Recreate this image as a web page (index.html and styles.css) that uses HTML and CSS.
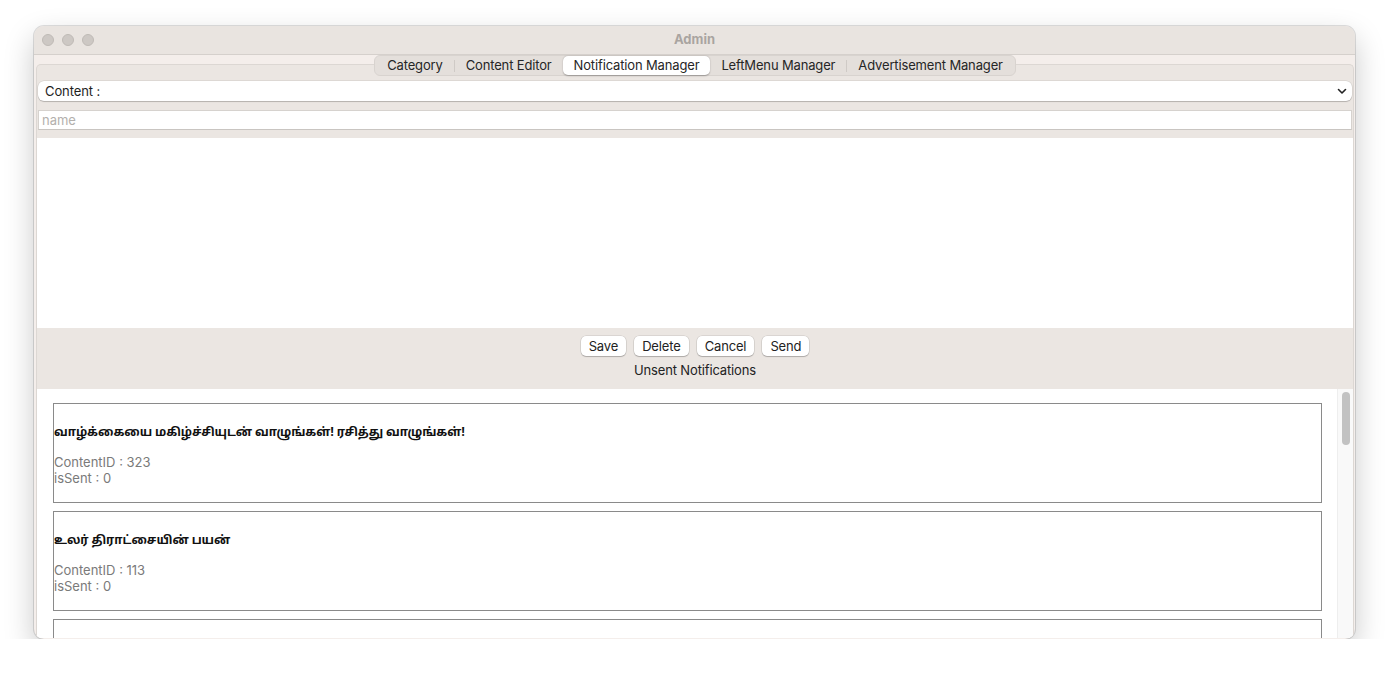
FILE: index.html
```html
<!DOCTYPE html>
<html>
<head>
<meta charset="utf-8">
<title>Admin</title>
<link rel="stylesheet" href="styles.css">
</head>
<body>
<div class="window">
  <div class="titlebar">
    <div class="lights"><span class="light"></span><span class="light"></span><span class="light"></span></div>
    <div class="title">Admin</div>
  </div>
  <div class="main">
    <div class="tabbox">
      <div class="tabs">
        <div class="tab">Category</div>
        <div class="sep"></div>
        <div class="tab">Content Editor</div>
        <div class="tab active">Notification Manager</div>
        <div class="tab">LeftMenu Manager</div>
        <div class="sep"></div>
        <div class="tab">Advertisement Manager</div>
      </div>
      <div class="select">
        <span>Content :</span>
        <svg class="chev" width="10" height="7" viewBox="0 0 10 7"><path d="M1.5 1.5 L5 5 L8.5 1.5" fill="none" stroke="#222" stroke-width="1.6" stroke-linecap="round" stroke-linejoin="round"/></svg>
      </div>
      <div class="input">name</div>
      <div class="editor"></div>
      <div class="actions">
        <div class="buttons">
          <div class="btn">Save</div>
          <div class="btn">Delete</div>
          <div class="btn">Cancel</div>
          <div class="btn">Send</div>
        </div>
        <div class="caption">Unsent Notifications</div>
      </div>
      <div class="list">
        <div class="list-content">
          <div class="card">
            <h3 class="card-title">வாழ்க்கையை மகிழ்ச்சியுடன் வாழுங்கள்! ரசித்து வாழுங்கள்!</h3>
            <div class="meta">ContentID : 323</div>
            <div class="meta">isSent : 0</div>
          </div>
          <div class="card">
            <h3 class="card-title">உலர் திராட்சையின் பயன்</h3>
            <div class="meta">ContentID : 113</div>
            <div class="meta">isSent : 0</div>
          </div>
          <div class="card card-partial"></div>
        </div>
        <div class="scrollbar"><div class="thumb"></div></div>
      </div>
    </div>
  </div>
</div>
</body>
</html>
```

FILE: styles.css
```css
* { box-sizing: border-box; }
html, body {
  margin: 0;
  padding: 0;
  background: #ffffff;
  font-family: "Inter", "Liberation Sans", "Noto Sans", sans-serif;
  font-size: 13px;
  color: #222;
}
body { padding: 26px 0 0 34px; }

.window {
  width: 1321px;
  height: 613px;
  border-radius: 10px;
  overflow: hidden;
  background: #f4eeeb;
  box-shadow: 0 0 0 1px rgba(0,0,0,0.12), 0 12px 30px rgba(0,0,0,0.22);
  display: flex;
  flex-direction: column;
}

.titlebar {
  height: 29px;
  flex: none;
  background: #e9e4e0;
  border-bottom: 1px solid #d5d0cc;
  display: flex;
  align-items: center;
  position: relative;
}
.lights { display: flex; gap: 8px; padding-left: 8px; }
.light {
  width: 12px; height: 12px; border-radius: 50%;
  background: #cdc8c4;
  border: 0.5px solid #bfbab6;
}
.title {
  position: absolute; left: 0; right: 0; top: 0; bottom: 0;
  display: flex; align-items: center; justify-content: center;
  font-weight: 700; color: #a9a4a1; font-size: 13px;
  padding-bottom: 2px;
}

.main {
  flex: 1;
  display: flex;
  flex-direction: column;
  padding: 9px 1px 1px 2px;
  min-height: 0;
}
.tabbox {
  flex: 1;
  min-height: 0;
  border: 1px solid #dcd7d3;
  border-bottom: none;
  border-radius: 5px 5px 0 0;
  background: #ebe6e2;
  display: flex;
  flex-direction: column;
}

.tabs {
  align-self: center;
  margin-top: -10px;
  height: 21px;
  display: flex;
  align-items: center;
  background: #e4dfdb;
  border: 1px solid #d8d3cf;
  border-radius: 6px;
  padding: 0 1px;
  letter-spacing: -0.15px;
}
.tab {
  height: 19px;
  line-height: 19px;
  padding: 0 11px;
  color: #262626;
  border-radius: 5px;
}
.tab.active {
  background: #ffffff;
  box-shadow: 0 0.5px 1.5px rgba(0,0,0,0.3);
}
.sep { width: 1px; height: 12px; background: #cfcac6; }

.select {
  margin: 5px 1px 0 1px;
  height: 20px;
  flex: none;
  background: #fff;
  border-radius: 6px;
  box-shadow: 0 0 0 0.5px rgba(0,0,0,0.12), 0 1px 1px rgba(0,0,0,0.18);
  display: flex;
  align-items: center;
  justify-content: space-between;
  padding: 0 5px 1px 7px;
  color: #1e1e1e;
  letter-spacing: -0.1px;
}
.chev { margin-top: 2px; }

.input {
  margin: 9px 1px 0 1px;
  height: 20px;
  flex: none;
  background: #fff;
  border: 1px solid #d6d2ce;
  border-bottom-color: #c9c5c1;
  padding: 0 3px;
  line-height: 18px;
  color: #b3b0ad;
}

.editor {
  margin-top: 8px;
  height: 190px;
  flex: none;
  background: #fff;
}

.actions {
  flex: none;
  height: 61px;
  padding-top: 8px;
  display: flex;
  flex-direction: column;
  align-items: center;
  letter-spacing: -0.15px;
}
.buttons { display: flex; gap: 8px; }
.btn {
  height: 20px;
  line-height: 20px;
  padding: 0 8px;
  background: #fff;
  border-radius: 5px;
  box-shadow: 0 0 0 0.5px rgba(0,0,0,0.14), 0 1px 1px rgba(0,0,0,0.2);
  color: #222;
}
.caption { margin-top: 6px; line-height: 16px; color: #222; }

.list {
  flex: 1;
  min-height: 0;
  background: #fff;
  display: flex;
}
.list-content {
  flex: 1;
  min-width: 0;
  overflow: hidden;
  padding: 14px 15px 0 16px;
}
.scrollbar {
  width: 16px;
  flex: none;
  background: #f9f9f9;
  border-left: 1px solid #eeeeee;
  padding: 3px 3px 0 4px;
}
.thumb {
  width: 8px;
  height: 53px;
  border-radius: 4px;
  background: #c2c2c2;
}

.card {
  border: 1px solid #8a8a8a;
  margin-bottom: 8px;
  padding-bottom: 16px;
}
.card-partial { height: 60px; }
.card-title {
  margin: 20px 0 12px 0;
  font-family: "Noto Sans Tamil", "Lohit Tamil", "Noto Sans", sans-serif;
  font-size: 12px;
  letter-spacing: -0.1px;
  line-height: 18px;
  font-weight: 700;
  color: #111;
}
.meta {
  line-height: 16px;
  color: #7a7a7a;
  font-size: 13px;
}
```
